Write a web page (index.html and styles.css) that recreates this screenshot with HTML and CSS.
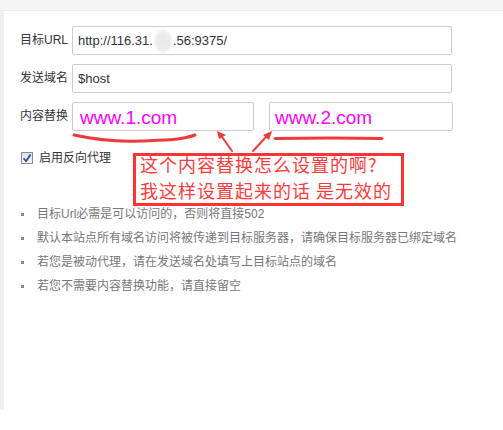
FILE: index.html
```html
<!DOCTYPE html>
<html lang="zh-CN">
<head>
<meta charset="utf-8">
<title>反向代理</title>
<link rel="stylesheet" href="styles.css">
</head>
<body>
<div class="topbar"></div>
<div class="panel">
  <div class="form">
    <div class="row">
      <span class="lbl">目标URL</span>
      <div class="field wide">http://116.31.<span class="blur"></span>.56:9375/</div>
    </div>
    <div class="row">
      <span class="lbl">发送域名</span>
      <div class="field wide">$host</div>
    </div>
    <div class="row">
      <span class="lbl">内容替换</span>
      <div class="pair">
        <div class="field half-a big">www.1.com</div>
        <div class="field half-b big">www.2.com</div>
      </div>
    </div>
  </div>
  <div class="check">
    <span class="box"><svg width="10" height="10" viewBox="0 0 10 10"><path d="M1.6 5.2 L4 8.2 L8.6 1.4" fill="none" stroke="#2f4aa6" stroke-width="1.8" stroke-linejoin="round"/></svg></span>
    <span>启用反向代理</span>
  </div>
  <ul class="tips">
    <li>目标Url必需是可以访问的，否则将直接502</li>
    <li>默认本站点所有域名访问将被传递到目标服务器，请确保目标服务器已绑定域名</li>
    <li>若您是被动代理，请在发送域名处填写上目标站点的域名</li>
    <li>若您不需要内容替换功能，请直接留空</li>
  </ul>
</div>
<div class="note">
  <div class="note-line">这个内容替换怎么设置的啊?</div>
  <div class="note-line">我这样设置起来的话 是无效的</div>
</div>
<svg class="marks" width="503" height="430" viewBox="0 0 503 430">
  <path d="M74 135 C92 139 112 142 140 141 C165 140 182 140 195 135" fill="none" stroke="#f03a3a" stroke-width="3" stroke-linecap="round"/>
  <path d="M275 138.5 C310 138 350 138 382 138.5" fill="none" stroke="#f03a3a" stroke-width="3" stroke-linecap="round"/>
  <path d="M232 151 L222 137" stroke="#f03a3a" stroke-width="2" stroke-linecap="round"/>
  <path d="M217 131 L226 135 L219 139 Z" fill="#f03a3a"/>
  <path d="M253 151 L266 137" stroke="#f03a3a" stroke-width="2" stroke-linecap="round"/>
  <path d="M272 131 L269 140 L263 135 Z" fill="#f03a3a"/>
</svg>
</body>
</html>
```
FILE: styles.css
```css
html, body {
  margin: 0;
  padding: 0;
  background: #fff;
}
body {
  position: relative;
  width: 503px;
  height: 430px;
  overflow: hidden;
  font-family: "Liberation Sans", "Noto Sans CJK SC", sans-serif;
  font-size: 12px;
  color: #333;
}
.topbar {
  height: 10px;
  background: #f5f5f5;
  border-bottom: 1px solid #eaeaea;
}
.panel {
  height: 399px;
  border-left: 4px solid #f0f0f0;
  padding: 15px 0 0 16px;
  box-sizing: border-box;
}
.form {
  display: flex;
  flex-direction: column;
  gap: 9px;
}
.row {
  display: flex;
  align-items: center;
  height: 29px;
}
.lbl {
  width: 52px;
  flex: none;
  line-height: 29px;
  color: #333;
}
.field {
  box-sizing: border-box;
  height: 29px;
  border: 1px solid #cccccc;
  border-radius: 2px;
  padding-left: 5px;
  font-size: 13px;
  line-height: 27px;
  color: #333;
  white-space: nowrap;
  background: #fff;
}
.wide {
  width: 380px;
}
.pair {
  display: flex;
  gap: 15px;
}
.half-a {
  width: 182px;
  padding-left: 7px;
}
.half-b {
  width: 184px;
  padding-left: 5px;
}
.big {
  font-size: 19px;
  color: #ff00ff;
  line-height: 30px;
}
.blur {
  display: inline-block;
  width: 20px;
  height: 25px;
  vertical-align: middle;
  border-radius: 50%;
  background: radial-gradient(ellipse at center, #e9e9e9 0%, #ececec 50%, rgba(255,255,255,0) 72%);
}
.check {
  display: flex;
  align-items: center;
  margin-top: 17px;
  height: 20px;
  line-height: 20px;
  color: #333;
}
.box {
  box-sizing: border-box;
  width: 12px;
  height: 12px;
  margin-left: 1px;
  margin-right: 6px;
  border: 1px solid #8a8d95;
  background: linear-gradient(#dedfe3, #fbfbfb);
  display: flex;
  align-items: center;
  justify-content: center;
}
.tips {
  list-style: none;
  margin: 34px 0 0 0;
  padding: 0;
  color: #777;
}
.tips li {
  display: flex;
  align-items: center;
  height: 24px;
  line-height: 24px;
}
.tips li::before {
  content: "";
  width: 3px;
  height: 3px;
  background: #8a8a8a;
  margin-left: 1px;
  margin-right: 13px;
  flex: none;
}
.note {
  position: absolute;
  left: 133px;
  top: 153px;
  width: 271px;
  height: 53px;
  box-sizing: border-box;
  border: 3px solid #ff3333;
  background: #fff;
  padding-left: 4px;
  display: flex;
  flex-direction: column;
}
.note-line {
  height: 26px;
  flex: none;
  font-family: "Noto Sans CJK SC", sans-serif;
  font-size: 18px;
  letter-spacing: 1px;
  line-height: 26px;
  color: #ff3a3a;
  white-space: nowrap;
}
.note-line:first-child {
  margin-top: -5px;
}
.marks {
  position: absolute;
  left: 0;
  top: 0;
  pointer-events: none;
}
```
